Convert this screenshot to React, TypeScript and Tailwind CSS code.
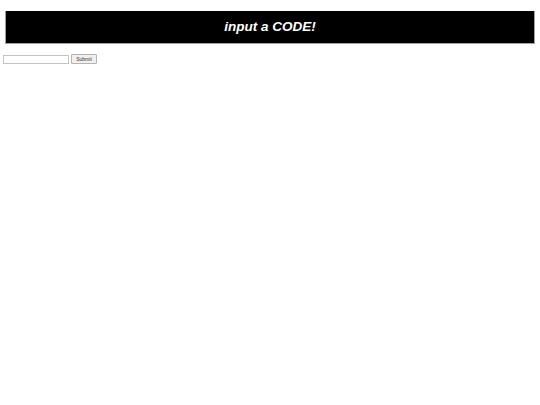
export default function App() {
  return (
    <div className="min-h-[405px] bg-white font-['Liberation_Sans',Arial,sans-serif]">
      <div className="px-[5px] pt-[11px]">
        <h1 className="flex h-[33px] items-center justify-center border-x border-b border-[#a0a0a0] bg-black text-[13.5px] font-bold italic text-white">
          input a CODE!
        </h1>
      </div>
      <form className="flex items-center gap-[2px] pl-[3px] pt-[10px]" onSubmit={(e) => e.preventDefault()}>
        <input
          type="text"
          className="h-[9px] w-[66px] border border-[#c4c4c4] bg-white text-[6px] outline-none"
        />
        <button
          type="submit"
          className="flex h-[10px] w-[26px] items-center justify-center rounded-[1px] border border-[#b4b4b4] bg-[#efefef] text-[5px] leading-none text-[#333]"
        >
          Submit
        </button>
      </form>
    </div>
  );
}
